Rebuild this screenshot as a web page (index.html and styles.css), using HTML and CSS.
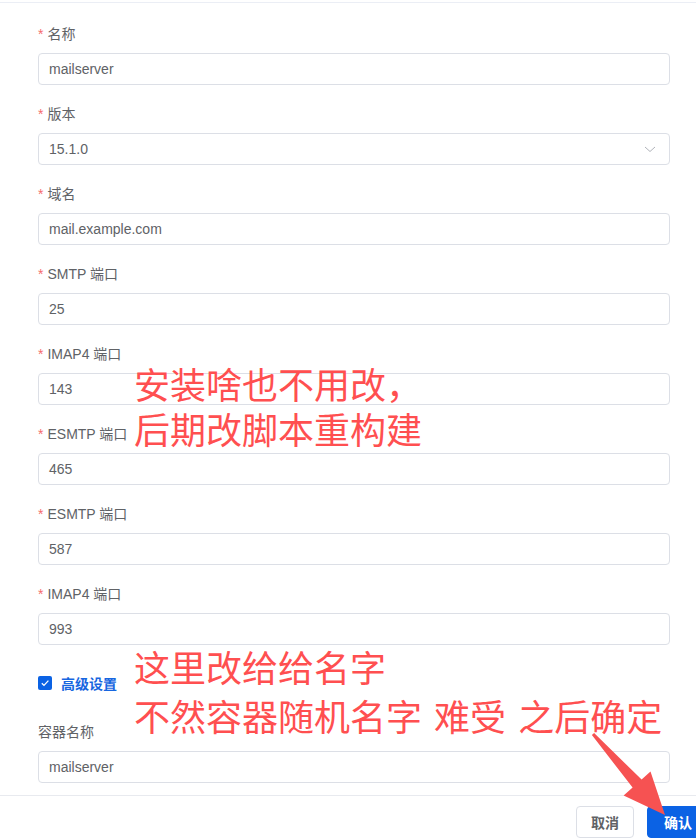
FILE: index.html
```html
<!DOCTYPE html>
<html lang="zh-CN">
<head>
<meta charset="utf-8">
<title>mailserver</title>
<link rel="stylesheet" href="styles.css">
</head>
<body>
<div class="page">
  <div class="topline"></div>
  <form class="form">
    <div class="item">
      <div class="label"><span class="req">*</span>名称</div>
      <div class="input">mailserver</div>
    </div>
    <div class="item">
      <div class="label"><span class="req">*</span>版本</div>
      <div class="input select">
        <span>15.1.0</span>
        <svg class="chev" width="12" height="12" viewBox="0 0 12 12"><polyline points="1,4 6,8.5 11,4" fill="none" stroke="#b0b3ba" stroke-width="1"/></svg>
      </div>
    </div>
    <div class="item">
      <div class="label"><span class="req">*</span>域名</div>
      <div class="input">mail.example.com</div>
    </div>
    <div class="item">
      <div class="label"><span class="req">*</span>SMTP 端口</div>
      <div class="input">25</div>
    </div>
    <div class="item">
      <div class="label"><span class="req">*</span>IMAP4 端口</div>
      <div class="input">143</div>
    </div>
    <div class="item">
      <div class="label"><span class="req">*</span>ESMTP 端口</div>
      <div class="input">465</div>
    </div>
    <div class="item">
      <div class="label"><span class="req">*</span>ESMTP 端口</div>
      <div class="input">587</div>
    </div>
    <div class="item">
      <div class="label"><span class="req">*</span>IMAP4 端口</div>
      <div class="input">993</div>
    </div>
    <div class="adv">
      <span class="checkbox"><svg width="14" height="14" viewBox="0 0 14 14"><polyline points="3.8,7.2 6,9.4 10.4,4.6" fill="none" stroke="#fff" stroke-width="1.3"/></svg></span>
      <span class="adv-text">高级设置</span>
    </div>
    <div class="item last">
      <div class="label">容器名称</div>
      <div class="input">mailserver</div>
    </div>
  </form>
  <div class="footer">
    <button class="btn" type="button">取消</button>
    <button class="btn primary" type="button">确认</button>
  </div>

  <div class="note note1">安装啥也不用改，<br>后期改脚本重构建</div>
  <div class="note note2">这里改给给名字<br>不然容器随机名字 难受 之后确定</div>
  <svg class="arrow" width="696" height="840" viewBox="0 0 696 840">
    <polygon points="594.1,733 641.6,779.6 650.5,771.5 665,815 623.6,795.6 632.6,787.6 591.9,735" fill="#f65252"/>
  </svg>
</div>
</body>
</html>
```

FILE: styles.css
```css
html, body {
  margin: 0;
  padding: 0;
  background: #fff;
}
body {
  width: 696px;
  height: 840px;
  overflow: hidden;
  font-family: "Liberation Sans", "Noto Sans CJK SC", sans-serif;
}
.page {
  position: relative;
  width: 696px;
  height: 840px;
}
.topline {
  height: 2px;
  border-bottom: 1px solid #ebeef5;
}
.form {
  padding: 20px 26px 0 38px;
  margin: 0;
}
.item {
  margin-bottom: 18px;
}
.item.last {
  margin-bottom: 0;
}
.label {
  height: 22px;
  line-height: 22px;
  font-size: 14px;
  color: #606266;
  margin-bottom: 8px;
}
.req {
  color: #f56c6c;
  margin-right: 4px;
}
.input {
  box-sizing: border-box;
  height: 32px;
  border: 1px solid #dcdfe6;
  border-radius: 4px;
  padding: 0 10px;
  display: flex;
  align-items: center;
  font-size: 14px;
  color: #606266;
}
.select {
  justify-content: space-between;
  padding-right: 13px;
}
.chev {
  display: block;
}
.adv {
  display: flex;
  align-items: center;
  height: 22px;
  margin: 27px 0 27px;
}
.checkbox {
  width: 14px;
  height: 14px;
  border-radius: 2px;
  background: #0b62e4;
  display: block;
  margin-right: 9px;
}
.checkbox svg {
  display: block;
}
.adv-text {
  font-size: 14px;
  font-weight: bold;
  color: #1766e0;
}
.footer {
  margin-top: 12px;
  border-top: 1px solid #e8eaef;
  padding-top: 10px;
  display: flex;
  justify-content: flex-end;
  gap: 13px;
  margin-right: -13px;
}
.btn {
  box-sizing: border-box;
  height: 32px;
  padding: 0 14px;
  border: 1px solid #dcdfe6;
  border-radius: 4px;
  background: #fff;
  color: #606266;
  font-size: 14px;
  font-weight: bold;
  font-family: "Liberation Sans", "Noto Sans CJK SC", sans-serif;
}
.btn.primary {
  background: #0b62e4;
  border-color: #0b62e4;
  color: #fff;
  padding: 0 16px;
}
.note {
  position: absolute;
  left: 134px;
  font-family: "Noto Sans CJK SC", sans-serif;
  font-size: 36px;
  color: #ff4f50;
  white-space: nowrap;
}
.note1 {
  top: 361px;
  line-height: 45px;
}
.note2 {
  top: 642px;
  line-height: 49px;
  word-spacing: 4px;
}
.arrow {
  position: absolute;
  left: 0;
  top: 0;
  pointer-events: none;
}
```
